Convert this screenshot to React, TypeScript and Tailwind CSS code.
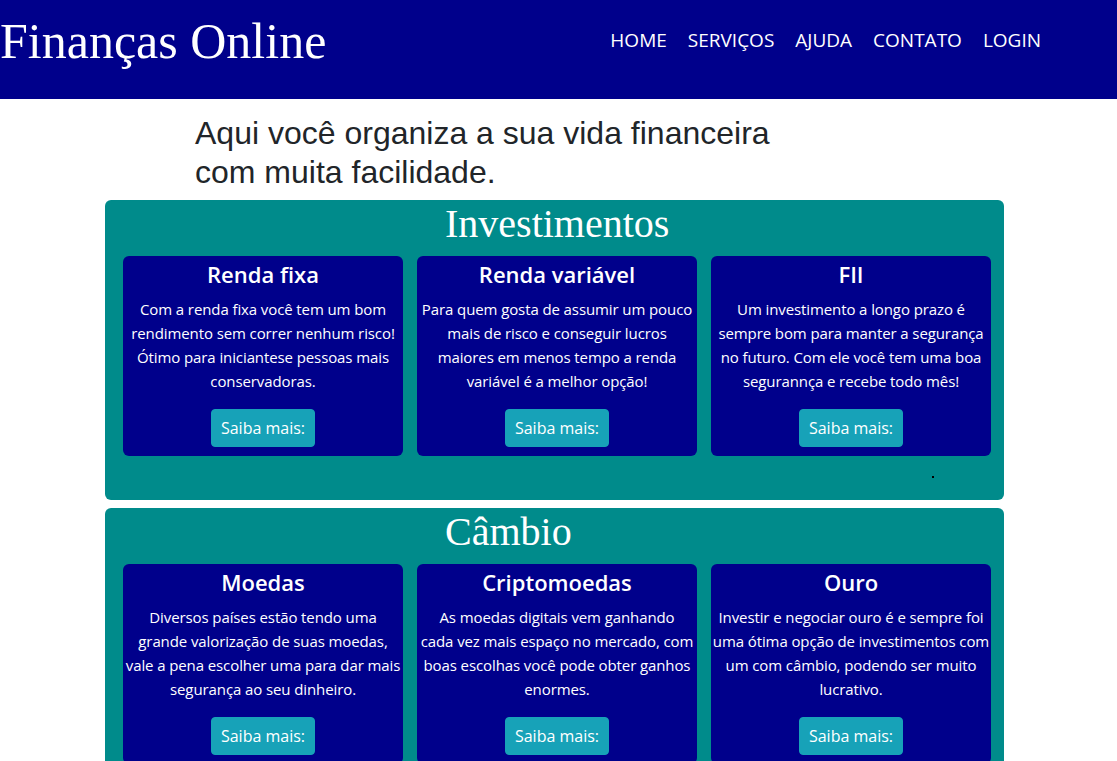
type CardItem = {
    title: string
    lines: string[]
}

type Section = {
    heading: string
    cards: CardItem[]
    dot?: boolean
}

const navItems = ["HOME", "SERVIÇOS", "AJUDA", "CONTATO", "LOGIN"]

const sections: Section[] = [
    {
        heading: "Investimentos",
        dot: true,
        cards: [
            {
                title: "Renda fixa",
                lines: [
                    "Com a renda fixa você tem um bom",
                    "rendimento sem correr nenhum risco!",
                    "Ótimo para iniciantese pessoas mais",
                    "conservadoras.",
                ],
            },
            {
                title: "Renda variável",
                lines: [
                    "Para quem gosta de assumir um pouco",
                    "mais de risco e conseguir lucros",
                    "maiores em menos tempo a renda",
                    "variável é a melhor opção!",
                ],
            },
            {
                title: "FII",
                lines: [
                    "Um investimento a longo prazo é",
                    "sempre bom para manter a segurança",
                    "no futuro. Com ele você tem uma boa",
                    "segurannça e recebe todo mês!",
                ],
            },
        ],
    },
    {
        heading: "Câmbio",
        cards: [
            {
                title: "Moedas",
                lines: [
                    "Diversos países estão tendo uma",
                    "grande valorização de suas moedas,",
                    "vale a pena escolher uma para dar mais",
                    "segurança ao seu dinheiro.",
                ],
            },
            {
                title: "Criptomoedas",
                lines: [
                    "As moedas digitais vem ganhando",
                    "cada vez mais espaço no mercado, com",
                    "boas escolhas você pode obter ganhos",
                    "enormes.",
                ],
            },
            {
                title: "Ouro",
                lines: [
                    "Investir e negociar ouro é e sempre foi",
                    "uma ótima opção de investimentos com",
                    "um com câmbio, podendo ser muito",
                    "lucrativo.",
                ],
            },
        ],
    },
]

function Card({ item }: { item: CardItem }) {
    return (
        <div className="flex flex-col items-center rounded-md bg-[#00008b] pt-[4px] pb-[9px] text-white">
            <h4 className="mb-[8px] text-[22px] leading-[29px] font-semibold">{item.title}</h4>
            <p className="mb-[16px] text-center text-[15px] leading-[24px] tracking-[-0.1px]">
                {item.lines.map((line) => (
                    <span key={line} className="block whitespace-nowrap">
                        {line}
                    </span>
                ))}
            </p>
            <button className="rounded-[4px] border border-[#17a2b8] bg-[#17a2b8] px-[9px] py-[6px] text-[16px] leading-[24px] text-white">
                Saiba mais:
            </button>
        </div>
    )
}

function App() {
    return (
        <div className="min-h-screen bg-white font-['Open_Sans',sans-serif]">
            <header className="flex h-[99px] items-start bg-[#00008b] text-white">
                <h1 className="mt-[11px] font-['Liberation_Serif',serif] text-[50px] leading-[60px]">
                    Finanças Online
                </h1>
                <nav className="mt-[28px] mr-[76px] ml-auto flex gap-[21px] text-[19px] leading-[24px]">
                    {navItems.map((item) => (
                        <a key={item} href="#">
                            {item}
                        </a>
                    ))}
                </nav>
            </header>

            <h2 className="mt-[15px] ml-[195px] font-['Liberation_Sans',sans-serif] text-[32px] leading-[39px] text-[#212529]">
                Aqui você organiza a sua vida financeira
                <br />
                com muita facilidade.
            </h2>

            <div className="mt-[8px] ml-[105px] flex w-[899px] flex-col gap-[8px]">
                {sections.map((section) => (
                    <section key={section.heading} className="rounded-md bg-[#008b8b] pr-[13px] pl-[18px]">
                        <h3 className="pl-[322px] font-['Liberation_Serif',serif] text-[40px] leading-[48px] text-white">
                            {section.heading}
                        </h3>
                        <div className="mt-[8px] grid grid-cols-3 gap-[14px]">
                            {section.cards.map((card) => (
                                <Card key={card.title} item={card} />
                            ))}
                        </div>
                        <div className="h-[44px] pt-[20px] pl-[809px]">
                            {section.dot && <div className="h-[2px] w-[2px] bg-black" />}
                        </div>
                    </section>
                ))}
            </div>
        </div>
    )
}

export default App
